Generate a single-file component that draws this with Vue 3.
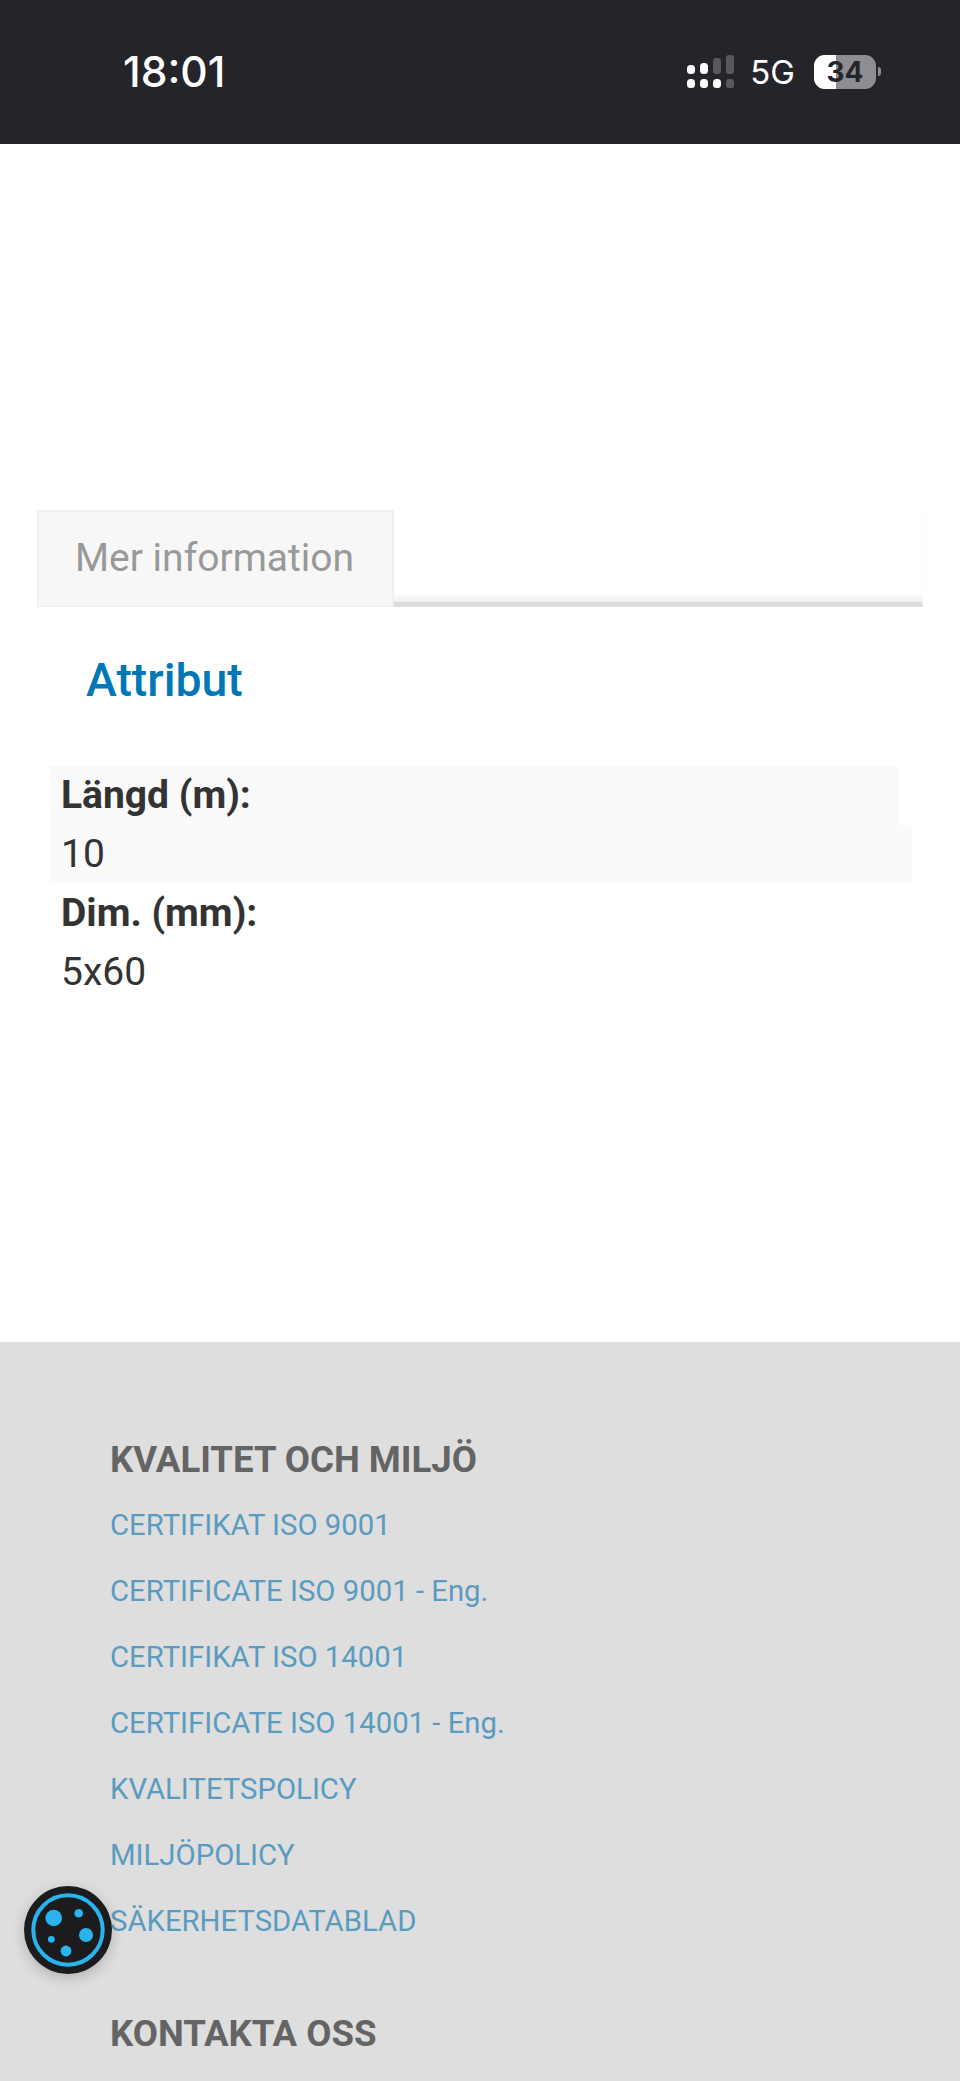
<template>
  <div class="page">
    <header class="status">
      <span class="time">18:01</span>
      <div class="indicators">
        <svg class="signal" width="48" height="33" viewBox="0 0 48 33" aria-hidden="true">
          <g fill="#fff">
            <rect x="1" y="10" width="8" height="9" rx="3.5" />
            <rect x="14" y="8" width="8" height="11" rx="3.5" />
            <rect x="1" y="24" width="8" height="9" rx="3.5" />
            <rect x="14" y="24" width="8" height="9" rx="3.5" />
            <rect x="27" y="24" width="8" height="9" rx="3.5" />
          </g>
          <g fill="#58595d">
            <rect x="27" y="3" width="8" height="16" rx="3" />
            <rect x="40" y="0" width="8" height="19" rx="3" />
            <rect x="40" y="24" width="8" height="9" rx="2.5" />
          </g>
        </svg>
        <span class="net">5G</span>
        <div class="battery">
          <span class="level"></span>
          <span class="pct">34</span>
        </div>
        <span class="nub"></span>
      </div>
    </header>

    <main class="content">
      <div class="tabs">
        <div class="tab">Mer information</div>
        <div class="tab-rest"></div>
      </div>
      <h2 class="title">Attribut</h2>
      <dl class="attrs">
        <dt class="shade-a">Längd (m):</dt>
        <dd class="shade-b">10</dd>
        <dt>Dim. (mm):</dt>
        <dd>5x60</dd>
      </dl>
    </main>

    <footer class="footer">
      <h3 class="foot-head">KVALITET OCH MILJÖ</h3>
      <ul class="links">
        <li v-for="l in links" :key="l"><a>{{ l }}</a></li>
      </ul>
      <h3 class="foot-head second">KONTAKTA OSS</h3>
    </footer>

    <button class="cookie" aria-label="Cookies">
      <svg class="cookie-icon" width="88" height="88" viewBox="0 0 88 88" aria-hidden="true">
        <circle cx="44" cy="44" r="34.7" fill="none" stroke="#29b4ef" stroke-width="4" />
        <g fill="#29b4ef">
          <circle cx="29.7" cy="32" r="8.3" />
          <circle cx="54.7" cy="27.3" r="4.3" />
          <circle cx="62" cy="49" r="7" />
          <circle cx="27.3" cy="53.3" r="3.4" />
          <circle cx="42" cy="65" r="5.4" />
        </g>
      </svg>
    </button>
  </div>
</template>

<script setup>
const links = [
  'CERTIFIKAT ISO 9001',
  'CERTIFICATE ISO 9001 - Eng.',
  'CERTIFIKAT ISO 14001',
  'CERTIFICATE ISO 14001 - Eng.',
  'KVALITETSPOLICY',
  'MILJÖPOLICY',
  'SÄKERHETSDATABLAD'
]
</script>

<style>
html, body { margin: 0; padding: 0; background: #fff; }
</style>

<style scoped>
.page {
  position: relative;
  width: 960px;
  height: 2081px;
  overflow: hidden;
  font-family: Roboto, "Liberation Sans", sans-serif;
  background: #fff;
}
.status {
  height: 144px;
  background: #24252b;
  display: flex;
  justify-content: space-between;
  align-items: center;
  padding: 0 79px 1px 123px;
  box-sizing: border-box;
  color: #fff;
}
.time {
  font-family: Inter, "Liberation Sans", sans-serif;
  font-size: 42.5px;
  font-weight: 500;
}
.indicators { display: flex; align-items: center; }
.signal { display: block; margin-right: 16px; }
.net {
  font-family: Inter, "Liberation Sans", sans-serif;
  font-size: 33px;
  margin-right: 19px;
}
.battery {
  position: relative;
  width: 62px;
  height: 34px;
  border-radius: 11px;
  overflow: hidden;
  background: #8e8e92;
  display: flex;
  align-items: center;
  justify-content: center;
}
.level {
  position: absolute;
  left: 0;
  top: 0;
  bottom: 0;
  width: 22px;
  background: #fff;
}
.pct {
  position: relative;
  font-family: Inter, "Liberation Sans", sans-serif;
  font-size: 28px;
  font-weight: 700;
  color: #24252b;
}
.nub {
  width: 3px;
  height: 9px;
  margin-left: 2px;
  border-radius: 0 6px 6px 0;
  background: #8e8e92;
}
.content { padding: 366px 37px 0; height: 1199px; box-sizing: border-box; }
.tabs { display: flex; height: 97px; }
.tab {
  flex: none;
  width: 357px;
  box-sizing: border-box;
  border: 2px solid #f0f0f0;
  background: #f7f7f7;
  color: #999;
  font-size: 39px;
  line-height: 93px;
  padding-left: 36px;
}
.tab-rest {
  flex: 1;
  box-sizing: border-box;
  border-bottom: 5px solid #dcdcdc;
  border-right: 1px solid #fafafa;
  box-shadow: inset 0 -8px 7px -5px #eaeaea;
}
.title {
  margin: 46px 0 0 49px;
  font-size: 46.4px;
  line-height: 54px;
  font-weight: 500;
  color: #0277b5;
}
.attrs { margin: 59px 0 0 12px; }
.attrs dt, .attrs dd {
  margin: 0;
  height: 59px;
  line-height: 59px;
  padding-left: 12px;
  font-size: 39px;
  color: #333;
}
.attrs dt { font-weight: 700; }
.shade-a { width: 838px; background: #fafafa; }
.shade-b { width: 851px; background: #fafafa; }
.footer {
  height: 739px;
  margin-top: -1px;
  background: #dedede;
  padding: 94px 0 0 110px;
  box-sizing: border-box;
}
.foot-head {
  margin: 0;
  font-size: 36.6px;
  line-height: 48px;
  font-weight: 700;
  color: #646464;
}
.second { margin-top: 56px; }
.links { list-style: none; margin: 8px 0 0; padding: 0; }
.links li {
  height: 66px;
  line-height: 66px;
  font-size: 29.3px;
  color: #5a9bc0;
}
.cookie {
  position: absolute;
  left: 24px;
  top: 1886px;
  width: 88px;
  height: 88px;
  padding: 0;
  border: 0;
  border-radius: 50%;
  background: #1c1c1e;
  box-shadow: 0 4px 14px rgba(0, 0, 0, 0.2);
}
.cookie-icon { display: block; }
</style>
